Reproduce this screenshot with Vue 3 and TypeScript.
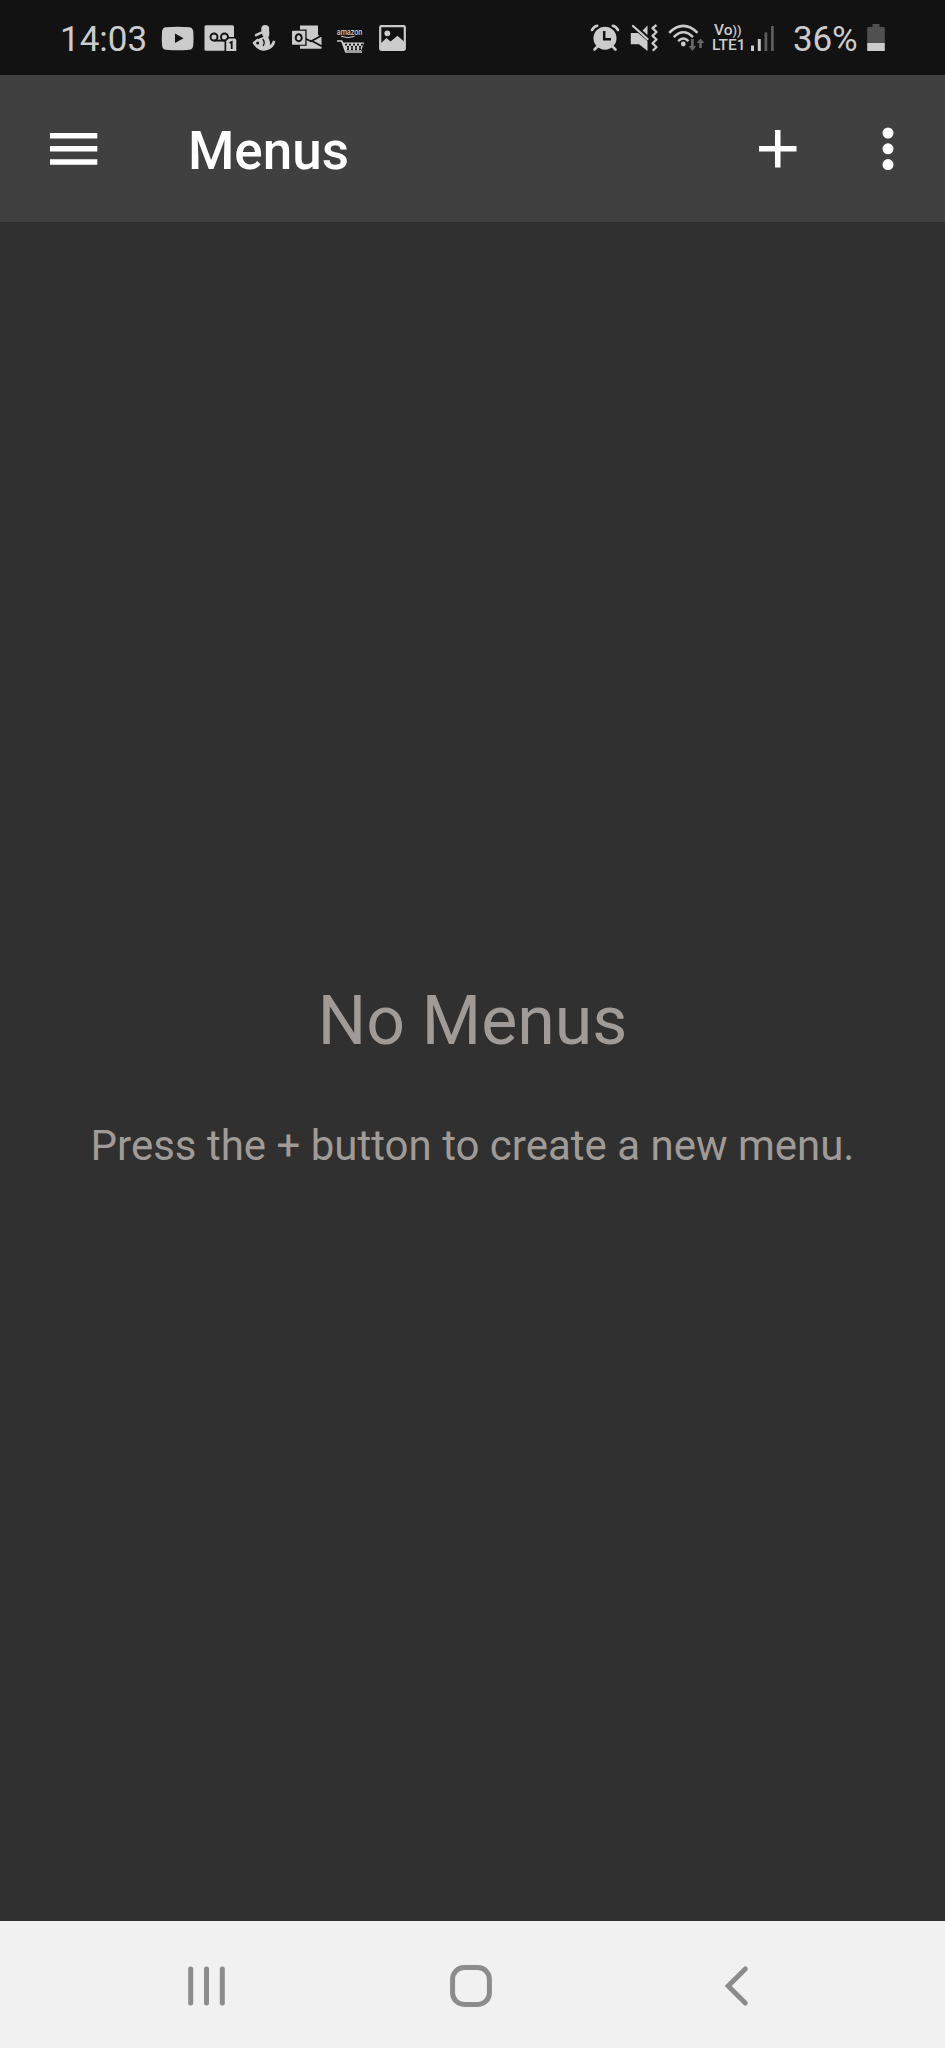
<script setup lang="ts">
import { ref } from 'vue'

const time = ref('14:03')
const battery = ref('36%')
const title = ref('Menus')
const emptyTitle = ref('No Menus')
const emptyHint = ref('Press the + button to create a new menu.')
</script>

<template>
  <div class="screen">
    <header class="status">
      <div class="group">
        <span class="clock">{{ time }}</span>
        <svg class="cell" viewBox="156 0 43 75" aria-label="YouTube">
          <path fill="currentColor" d="M166 27.3Q178 26.300 189 27.300Q193 27.500 193.300 32Q193.800 38.500 193.300 45Q193 49.500 189 49.800Q178 50.800 166 49.800Q162.300 49.500 162 45Q161.500 38.500 162 32Q162.300 27.500 166 27.300Z" />
          <path fill="#121212" d="M175 33.500L183.500 38.300L175 43Z" />
        </svg>
        <svg class="cell" viewBox="199 0 43 75" aria-label="Voicemail">
          <rect x="204.500" y="25.200" width="29.500" height="25.500" rx="1.500" fill="currentColor" />
          <g fill="none" stroke="#121212" stroke-width="1.900">
            <circle cx="214" cy="37" r="3.500" />
            <circle cx="224.500" cy="37" r="3.500" />
            <path d="M214 40.600H225" />
          </g>
          <path fill="#121212" d="M224.500 40.500L227.500 37H238V52H224.500Z" />
          <path fill="currentColor" d="M226.200 41L228.800 38.600H234.500Q236.300 38.600 236.300 40.300V51H226.200Z" />
          <path fill="none" stroke="#121212" stroke-width="1.800" d="M229.600 43L231.700 42V49" />
        </svg>
        <svg class="cell" viewBox="242 0 43 75" aria-label="Mother and baby">
          <circle cx="265.200" cy="29" r="4" fill="currentColor" />
          <path fill="currentColor" d="M261.800 30H269Q270 34.500 268.300 37.500Q270.800 41.500 269.800 45.500Q272.300 43.500 273 40.500L275.300 41.200Q274.500 46.500 269.500 49.300Q264 51.800 259.500 49.800Q254.500 47 252.400 42.500L257.500 38.500L262.500 36.500Z" />
          <path fill="none" stroke="currentColor" stroke-width="2.500" stroke-linecap="round" d="M256 35.200L262 32.400" />
          <path fill="none" stroke="#121212" stroke-width="1.300" stroke-linecap="round" d="M258 38.300L262.800 36.400M263 39.500Q265.300 42.500 263.300 45.500" />
          <circle cx="257.700" cy="43" r="1.500" fill="#121212" />
        </svg>
        <svg class="cell" viewBox="285 0 43 75" aria-label="Outlook">
          <path fill="currentColor" d="M300 25.500H318V35L321.500 37V48.800H300Z" />
          <path fill="none" stroke="#121212" stroke-width="1.800" d="M305 38.500L311 41.200L321.800 35.500M312 41L321.800 46.200" />
          <rect x="290.800" y="29.500" width="15.800" height="16.300" fill="#121212" />
          <rect x="292" y="30.700" width="13.300" height="14" rx=".8" fill="currentColor" />
          <ellipse cx="298.700" cy="37.700" rx="3" ry="3.500" fill="none" stroke="#121212" stroke-width="1.900" />
        </svg>
        <svg class="cell" viewBox="328 0 43 75" aria-label="Amazon shopping">
          <text x="336.800" y="34.800" font-size="8.500" font-weight="500" textLength="25.500" lengthAdjust="spacingAndGlyphs" fill="currentColor">amazon</text>
          <path fill="none" stroke="currentColor" stroke-width="1" d="M341 36.200Q348 39 354.500 36.400" />
          <path fill="none" stroke="currentColor" stroke-width="1.600" d="M337 41H341.800L345.800 52H362" />
          <path fill="currentColor" d="M342.200 42.500H364L361.300 50.800H345.500Z" />
          <path fill="none" stroke="#121212" stroke-width="1.700" stroke-dasharray="2 2" d="M345 44.700H363M347 46.900H362M347 49.100H361" />
        </svg>
        <svg class="cell" viewBox="371 0 43 75" aria-label="Gallery">
          <rect x="380.200" y="26.200" width="24.600" height="23.600" rx="1" fill="none" stroke="currentColor" stroke-width="2.200" />
          <circle cx="387.300" cy="33.300" r="2.900" fill="currentColor" />
          <path fill="currentColor" d="M380.500 43.500L386.500 38L390.500 41.500L397.500 35.800L404.500 42V49.500H380.500Z" />
        </svg>
      </div>

      <div class="group">
        <svg class="system" viewBox="585 0 40 75" aria-label="Alarm">
          <circle cx="605" cy="38.200" r="11.500" fill="currentColor" />
          <path fill="none" stroke="currentColor" stroke-width="2.600" stroke-linecap="round" d="M592 30Q594 26.500 597.200 25.800M618 30Q616 26.500 612.800 25.800M597.500 46.500L594.500 49.500M612.500 46.500L615.500 49.500" />
          <path fill="none" stroke="#121212" stroke-width="2.500" d="M604.200 31V39.300H611" />
        </svg>
        <svg class="system" viewBox="625 0 40 75" aria-label="Muted with vibration">
          <path fill="currentColor" d="M630.800 33H638L647.500 41V51L639 44.200H630.800ZM642.500 30.500L647.500 25.500V35Z" />
          <path fill="none" stroke="currentColor" stroke-width="2.300" stroke-linecap="round" d="M633 26L647.500 39" />
          <path fill="none" stroke="currentColor" stroke-width="2.300" stroke-linejoin="round" d="M656.500 25L652.500 28.200L656.500 32L652.500 35.800L656.500 39.500L652.500 43.300L656.500 47L652.800 50.800" />
        </svg>
        <svg class="wifi" viewBox="665 0 43 75" aria-label="Wi-Fi">
          <g fill="none" stroke="currentColor" stroke-width="2.500">
            <path d="M669.200 32.800Q683.300 19 697.500 32.800" />
            <path d="M673.800 37.200Q683.300 27.500 693 37.200" />
            <path d="M678.200 41.200Q683.300 36 688.500 41.200" />
          </g>
          <circle cx="683.300" cy="44" r="2.400" fill="currentColor" />
          <path fill="#666" d="M691 39H693.800V46H696.200L692.400 51L688.600 46H691ZM699.200 48V43H696.600L700.500 38.600L704.400 43H701.800V48Z" />
        </svg>
        <div class="volte">
          <span class="vo">Vo<span class="waves">))</span></span>
          <span class="lte">LTE1</span>
        </div>
        <svg class="signal" viewBox="748 0 32 75" aria-label="Signal strength">
          <path fill="currentColor" d="M751 45.500H754V51H751ZM757.800 39H760.800V51H757.800Z" />
          <path fill="#5c5c5c" d="M764.500 32.500H767.300V51H764.500ZM771 26H773.800V51H771Z" />
        </svg>
        <span class="percent">{{ battery }}</span>
        <svg class="battery" viewBox="862 0 28 75" aria-label="Battery">
          <path fill="#505050" d="M872.500 24H879.500V27H883.500Q884.800 27 884.800 28.300V43H867.200V28.300Q867.200 27 868.500 27H872.500Z" />
          <path fill="currentColor" d="M867.200 43H884.800V51H867.200Z" />
        </svg>
      </div>
    </header>

    <div class="toolbar">
      <button class="menu" aria-label="Open navigation">
        <svg viewBox="0 0 48 34"><path d="M0 1H47.300V6.500H0ZM0 14.100H47.300V19.600H0ZM0 27.200H47.300V32.700H0Z" fill="currentColor" /></svg>
      </button>
      <h1>{{ title }}</h1>
      <button class="add" aria-label="Create menu">
        <svg viewBox="0 0 38 38"><path d="M16 0H21.500V16H37.500V21.500H21.500V37.500H16V21.500H0V16H16Z" fill="currentColor" /></svg>
      </button>
      <button class="more" aria-label="More options">
        <svg viewBox="0 0 12 44"><g fill="currentColor"><circle cx="6" cy="6" r="5.500" /><circle cx="6" cy="21.800" r="5.500" /><circle cx="6" cy="37.600" r="5.500" /></g></svg>
      </button>
    </div>

    <main class="empty">
      <h2>{{ emptyTitle }}</h2>
      <p>{{ emptyHint }}</p>
    </main>

    <nav class="navigation">
      <svg viewBox="0 0 44 44" aria-label="Recent apps"><path d="M6.700 5V39.100M22.500 5V39.100M38.300 5V39.100" /></svg>
      <svg viewBox="0 0 44 44" aria-label="Home"><rect x="3.600" y="3.600" width="36.800" height="36.800" rx="11.500" /></svg>
      <svg viewBox="0 0 44 44" aria-label="Back"><path d="M31.300 5L14.200 22L31.300 39" /></svg>
    </nav>
  </div>
</template>

<style>
body {
  margin: 0;
  background: #303030;
}
</style>

<style scoped>
.screen {
  display: flex;
  flex-direction: column;
  width: 945px;
  height: 2048px;
  overflow: hidden;
  background: #303030;
  font-family: Roboto, "Liberation Sans", sans-serif;
}
.status {
  display: flex;
  justify-content: space-between;
  flex: 0 0 75px;
  padding: 0 55px 0 60px;
  background: #121212;
  color: #cbcbcb;
}
.group {
  display: flex;
}
svg {
  display: block;
  flex: none;
}
.clock,
.percent {
  padding-top: 4px;
  line-height: 71px;
  font-size: 35px;
  white-space: nowrap;
}
.clock {
  width: 96px;
}
.percent {
  width: 69px;
  margin-left: 13px;
  letter-spacing: -0.2px;
}
.cell {
  width: 43px;
  height: 75px;
}
.system {
  width: 40px;
  height: 75px;
}
.wifi {
  width: 43px;
  height: 75px;
}
.volte {
  display: flex;
  flex-direction: column;
  width: 36px;
  padding: 23px 0 0 4px;
  font-weight: 500;
  white-space: nowrap;
}
.vo {
  padding-left: 2px;
  font-size: 15.5px;
  line-height: 15px;
}
.waves {
  font-size: 13px;
}
.lte {
  font-size: 15.5px;
  line-height: 15px;
}
.signal {
  width: 32px;
  height: 75px;
}
.battery {
  width: 28px;
  height: 75px;
}
.toolbar {
  display: flex;
  align-items: center;
  flex: 0 0 147px;
  box-sizing: border-box;
  padding: 0 51px 0 50px;
  background: #404040;
  color: #fff;
}
button {
  padding: 0;
  border: 0;
  background: none;
  color: inherit;
}
.menu svg {
  width: 48px;
  height: 34px;
}
.add svg {
  width: 38px;
  height: 38px;
}
.more svg {
  width: 12px;
  height: 44px;
}
.more {
  margin-left: 85px;
}
h1 {
  flex: 1;
  margin: 4px 0 0 90px;
  font-size: 53px;
  font-weight: 500;
  line-height: 62px;
}
.empty {
  display: flex;
  flex: 1;
  flex-direction: column;
  align-items: center;
  padding-top: 759px;
  color: #a19b97;
}
h2 {
  margin: 0;
  font-size: 68px;
  font-weight: 400;
  line-height: 80px;
}
p {
  margin: 60px 0 0;
  font-size: 42px;
  line-height: 50px;
  white-space: nowrap;
}
.navigation {
  display: flex;
  flex: 0 0 127px;
  box-sizing: border-box;
  gap: 221px;
  padding: 43px 0 0 184px;
  background: #f1f1f1;
}
.navigation svg {
  width: 44px;
  height: 44px;
  fill: none;
  stroke: #8c8c8c;
  stroke-width: 5;
  stroke-linecap: round;
}
</style>
